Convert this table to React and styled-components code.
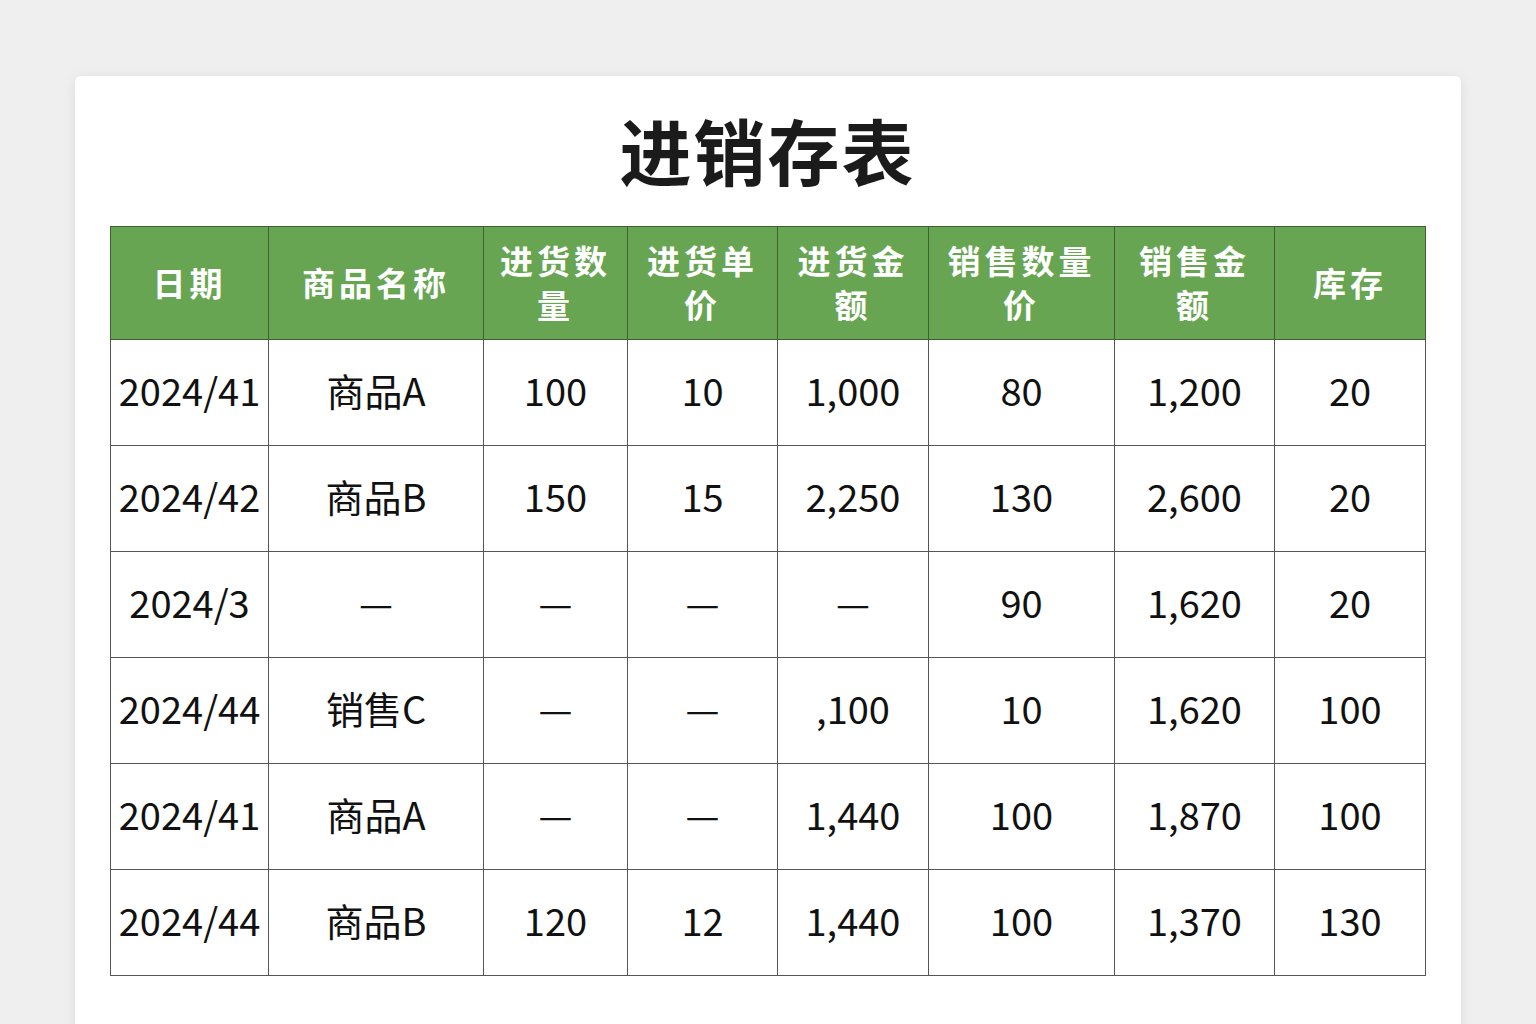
import React from "react";
import styled, { createGlobalStyle } from "styled-components";

const GlobalStyle = createGlobalStyle`
    html, body {
        margin: 0;
        padding: 0;
        background: #efefef;
        font-family: "Noto Sans CJK SC", "Noto Sans", sans-serif;
    }
`;

const Page = styled.div`
    width: 1536px;
    height: 1024px;
    overflow: hidden;
    padding: 76px 75px 0 75px;
    box-sizing: border-box;
`;

const Card = styled.div`
    background: #ffffff;
    border-radius: 6px;
    box-shadow: 0 2px 14px rgba(0, 0, 0, 0.08);
    padding: 24px 36px 60px 35px;
    min-height: 1000px;
    box-sizing: border-box;
`;

const Title = styled.h1`
    margin: 0 0 28px;
    height: 98px;
    line-height: 98px;
    text-align: center;
    font-size: 72px;
    font-weight: 700;
    color: #1b1b1b;
    letter-spacing: 2px;
`;

const Table = styled.table`
    width: 1315px;
    border-collapse: collapse;
    table-layout: fixed;
`;

const HeadCell = styled.th`
    height: 110px;
    padding: 0 0 2px;
    background: #67a552;
    color: #ffffff;
    font-size: 33px;
    font-weight: 700;
    line-height: 44px;
    letter-spacing: 4px;
    text-align: center;
    border: 1px solid #3f5f35;
    border-left-color: ${(p) => (p.$first ? "#3f5f35" : "#2f3f2a")};
`;

const Cell = styled.td`
    height: 99px;
    padding: 0 0 6px;
    text-align: center;
    font-size: 38px;
    font-weight: 400;
    color: #111111;
    border: 1px solid #555555;
    white-space: nowrap;
`;

const columns = [
    { w: 158, label: ["日期"] },
    { w: 215, label: ["商品名称"] },
    { w: 144, label: ["进货数", "量"] },
    { w: 150, label: ["进货单", "价"] },
    { w: 151, label: ["进货金", "额"] },
    { w: 186, label: ["销售数量", "价"] },
    { w: 160, label: ["销售金", "额"] },
    { w: 151, label: ["库存"] },
];

const dash = "—";

const rows = [
    ["2024/41", "商品A", "100", "10", "1,000", "80", "1,200", "20"],
    ["2024/42", "商品B", "150", "15", "2,250", "130", "2,600", "20"],
    ["2024/3", dash, dash, dash, dash, "90", "1,620", "20"],
    ["2024/44", "销售C", dash, dash, ",100", "10", "1,620", "100"],
    ["2024/41", "商品A", dash, dash, "1,440", "100", "1,870", "100"],
    ["2024/44", "商品B", "120", "12", "1,440", "100", "1,370", "130"],
];

export default function App() {
    return (
        <>
            <GlobalStyle />
            <Page>
                <Card>
                    <Title>进销存表</Title>
                    <Table>
                        <colgroup>
                            {columns.map((c, i) => (
                                <col key={i} style={{ width: c.w }} />
                            ))}
                        </colgroup>
                        <thead>
                            <tr>
                                {columns.map((c, i) => (
                                    <HeadCell key={i} $first={i === 0}>
                                        {c.label.map((l, j) => (
                                            <div key={j}>{l}</div>
                                        ))}
                                    </HeadCell>
                                ))}
                            </tr>
                        </thead>
                        <tbody>
                            {rows.map((r, i) => (
                                <tr key={i}>
                                    {r.map((v, j) => (
                                        <Cell key={j}>{v}</Cell>
                                    ))}
                                </tr>
                            ))}
                        </tbody>
                    </Table>
                </Card>
            </Page>
        </>
    );
}
